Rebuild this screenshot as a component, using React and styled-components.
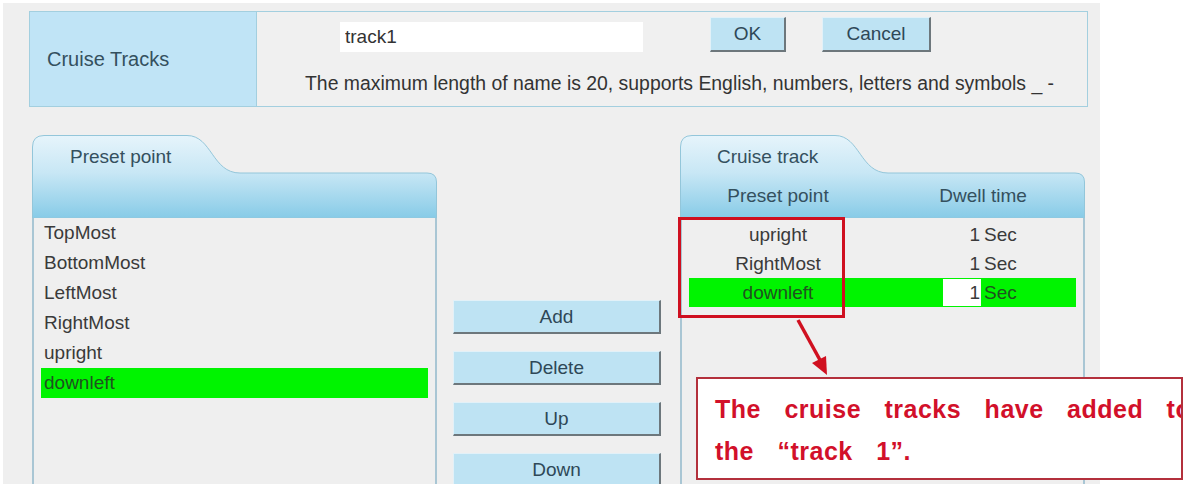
import React from 'react';
import styled, { createGlobalStyle } from 'styled-components';

const Global = createGlobalStyle`
  html, body { margin: 0; padding: 0; background: #ffffff; }
  body { font-family: "Liberation Sans", Arial, sans-serif; }
  * { box-sizing: border-box; }
`;

const Page = styled.div`
  position: relative;
  margin: 3px 0 0 3px;
  width: 1097px;
  height: 481px;
  background: #efefef;
  padding: 8px 0 0 26px;
  display: flex;
  flex-direction: column;
`;

const HeaderTable = styled.div`
  display: grid;
  grid-template-columns: 227px 1fr;
  width: 1059px;
  height: 96px;
  border: 1px solid #a3cfdf;
  flex-shrink: 0;
`;

const TitleCell = styled.div`
  background: #c0e4f6;
  border-right: 1px solid #a3cfdf;
  display: flex;
  align-items: center;
  padding-left: 17px;
  font-size: 20px;
  color: #34505e;
`;

const FormCell = styled.div`
  background: #f0f0f0;
  padding-top: 5px;
  display: flex;
  flex-direction: column;
`;

const FormRow = styled.div`
  display: flex;
  align-items: flex-end;
  padding-left: 83px;
`;

const NameInput = styled.input`
  width: 303px;
  height: 30px;
  border: none;
  background: #ffffff;
  font: 19px "Liberation Sans", Arial, sans-serif;
  color: #333;
  padding: 0 5px;
  outline: none;
`;

const ActionButton = styled.button`
  margin-left: ${p => p.$gap || 0}px;
  width: ${p => p.$w}px;
  height: ${p => p.$h || 35}px;
  flex-shrink: 0;
  background: #bee3f3;
  border: none;
  border-top: 1px solid #e2f1f8;
  border-left: 1px solid #e2f1f8;
  border-right: 2px solid #6d777c;
  border-bottom: 2px solid #6d777c;
  font: 19px "Liberation Sans", Arial, sans-serif;
  color: #2e4857;
  padding: 0;
`;

const HelpText = styled.div`
  margin-top: 20px;
  padding-left: 48px;
  font-size: 19.4px;
  color: #333;
  white-space: nowrap;
`;

const Main = styled.div`
  flex: 1;
  display: flex;
  margin-top: 28px;
  padding-left: 3px;
  padding-bottom: 2px;
`;

const Panel = styled.div`
  width: 405px;
  flex-shrink: 0;
  display: flex;
  flex-direction: column;
`;

const PanelHead = styled.div`
  position: relative;
  height: 83px;
  flex-shrink: 0;
`;

const HeadShape = styled.svg`
  position: absolute;
  left: 0;
  top: 0;
`;

const TabLabel = styled.div`
  position: relative;
  height: 38px;
  padding: 5px 0 0 ${p => p.$indent}px;
  line-height: 34px;
  font-size: 19px;
  color: #34505e;
`;

const HeadColumns = styled.div`
  position: relative;
  height: 45px;
  display: grid;
  grid-template-columns: 178px 210px;
  align-items: center;
  padding: 0 8px 0 9px;
  font-size: 19px;
  color: #34505e;
`;

const HeadCol = styled.div`
  text-align: center;
  padding-left: ${p => p.$shift || 0}px;
`;

const PanelBody = styled.div`
  flex: 1;
  border-left: 2px solid #a9c6d4;
  border-right: 2px solid #a9c6d4;
  padding: ${p => p.$top || 0}px 7px 0 7px;
`;

const ListItem = styled.div`
  height: 30px;
  line-height: 30px;
  padding-left: 3px;
  font-size: 19px;
  color: ${p => (p.$selected ? '#1f521f' : '#3a3a3a')};
  background: ${p => (p.$selected ? '#00f400' : 'transparent')};
`;

const Middle = styled.div`
  width: 243px;
  flex-shrink: 0;
  display: flex;
  flex-direction: column;
  gap: 17px;
  padding: 165px 0 0 16px;
  overflow: hidden;
`;

const TrackRow = styled.div`
  display: grid;
  grid-template-columns: 178px 1fr;
  height: 29px;
  align-items: center;
  font-size: 19px;
  color: ${p => (p.$selected ? '#1f521f' : '#3a3a3a')};
  background: ${p => (p.$selected ? '#00f400' : 'transparent')};
`;

const TrackName = styled.div`
  text-align: center;
`;

const DwellCell = styled.div`
  display: flex;
  align-items: center;
  padding-left: 76px;
`;

const DwellValue = styled.div`
  width: 38px;
  height: 27px;
  line-height: 27px;
  text-align: right;
  padding-right: 1px;
  color: #3a3a3a;
  background: ${p => (p.$editing ? '#ffffff' : 'transparent')};
`;

const DwellUnit = styled.span`
  margin-left: 3px;
`;

const RedFrame = styled.div`
  position: absolute;
  left: 675px;
  top: 214px;
  width: 167px;
  height: 101px;
  border: 3px solid #cf1020;
`;

const Arrow = styled.svg`
  position: absolute;
  left: 780px;
  top: 310px;
`;

const Callout = styled.div`
  position: absolute;
  left: 693px;
  top: 374px;
  width: 487px;
  height: 103px;
  background: #ffffff;
  border: 2px solid #b3303c;
  overflow: hidden;
  padding: 9px 0 0 17px;
  font-weight: bold;
  font-size: 25px;
  letter-spacing: 0.5px;
  word-spacing: 16px;
  line-height: 42px;
  color: #d2102a;
  white-space: nowrap;
`;

function TabShape() {
  return (
    <HeadShape width="405" height="83" viewBox="0 0 405 83">
      <defs>
        <linearGradient id="tabGrad" x1="0" y1="0" x2="0" y2="1">
          <stop offset="0" stopColor="#e6f4fb" />
          <stop offset="0.45" stopColor="#c8e7f5" />
          <stop offset="1" stopColor="#87cbe7" />
        </linearGradient>
      </defs>
      <path
        d="M0.5 83 L0.5 12 Q0.5 0.5 12 0.5 L155 0.5 C180 0.5 180 38 208 38 L395 38 Q404.5 38 404.5 47 L404.5 83 Z"
        fill="url(#tabGrad)"
        stroke="#93c6da"
        strokeWidth="1"
      />
    </HeadShape>
  );
}

const presets = ['TopMost', 'BottomMost', 'LeftMost', 'RightMost', 'upright', 'downleft'];
const track = [
  { name: 'upright', dwell: 1 },
  { name: 'RightMost', dwell: 1 },
  { name: 'downleft', dwell: 1, selected: true },
];

export default function App() {
  return (
    <>
      <Global />
      <Page>
        <HeaderTable>
          <TitleCell>Cruise Tracks</TitleCell>
          <FormCell>
            <FormRow>
              <NameInput defaultValue="track1" />
              <ActionButton $gap={67} $w={76}>OK</ActionButton>
              <ActionButton $gap={36} $w={109}>Cancel</ActionButton>
            </FormRow>
            <HelpText>
              The maximum length of name is 20, supports English, numbers, letters and symbols _ -
            </HelpText>
          </FormCell>
        </HeaderTable>

        <Main>
          <Panel>
            <PanelHead>
              <TabShape />
              <TabLabel $indent={38}>Preset point</TabLabel>
            </PanelHead>
            <PanelBody>
              {presets.map(p => (
                <ListItem key={p} $selected={p === 'downleft'}>{p}</ListItem>
              ))}
            </PanelBody>
          </Panel>

          <Middle>
            <ActionButton $w={208} $h={34}>Add</ActionButton>
            <ActionButton $w={208} $h={34}>Delete</ActionButton>
            <ActionButton $w={208} $h={34}>Up</ActionButton>
            <ActionButton $w={208} $h={34}>Down</ActionButton>
          </Middle>

          <Panel>
            <PanelHead>
              <TabShape />
              <TabLabel $indent={37}>Cruise track</TabLabel>
              <HeadColumns>
                <HeadCol>Preset point</HeadCol>
                <HeadCol $shift={22}>Dwell time</HeadCol>
              </HeadColumns>
            </PanelHead>
            <PanelBody $top={2}>
              {track.map(t => (
                <TrackRow key={t.name} $selected={t.selected}>
                  <TrackName>{t.name}</TrackName>
                  <DwellCell>
                    <DwellValue $editing={t.selected}>{t.dwell}</DwellValue>
                    <DwellUnit>Sec</DwellUnit>
                  </DwellCell>
                </TrackRow>
              ))}
            </PanelBody>
          </Panel>
        </Main>

        <RedFrame />
        <Arrow width="60" height="70" viewBox="0 0 60 70">
          <line x1="15" y1="7" x2="37" y2="47" stroke="#d01020" strokeWidth="3.5" />
          <polygon points="44,62 29,50 43,43" fill="#d01020" />
        </Arrow>
        <Callout>
          The cruise tracks have added to
          <br />
          the “track 1”.
        </Callout>
      </Page>
    </>
  );
}
